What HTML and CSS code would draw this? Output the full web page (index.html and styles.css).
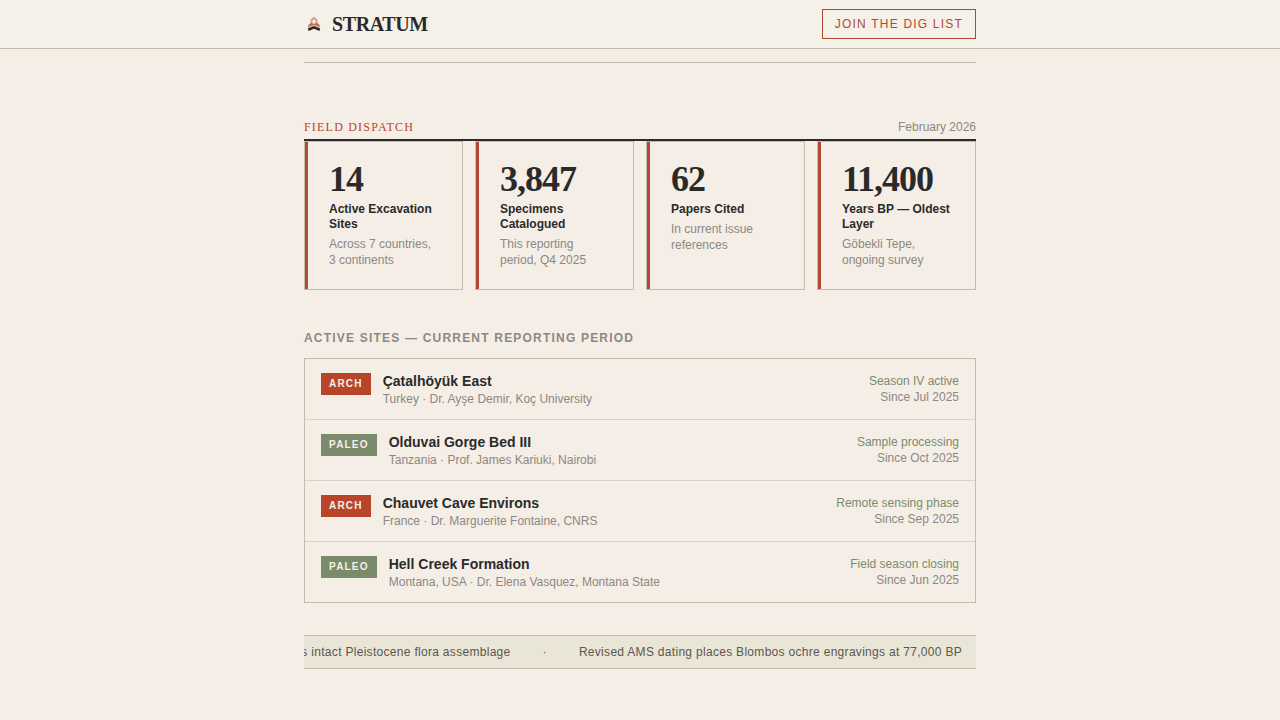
FILE: index.html
```html
<!DOCTYPE html>
<html lang="en">
  <head>
    <meta charset="UTF-8">
    <meta name="viewport" content="width=device-width, initial-scale=1">
    <title>Stratum</title>
    <link rel="stylesheet" href="styles.css">
  </head>
  <body>
    <header class="topbar">
      <div class="wrap topbar-inner">
        <a class="logo" href="#">
          <svg class="logo-mark" viewBox="0 0 20 20" aria-hidden="true">
            <path d="M7.6 9V6L10 4L12.4 6V9" fill="none" stroke="#dd9a80" stroke-width="2"/>
            <path d="M4 11.5L7 8.8L10 9.8L13 8.8L16 11.5L15.5 13L10 10.8L4.5 13Z" fill="#c4674c"/>
            <path d="M4.5 13.6L10 11.4L15.5 13.6" fill="none" stroke="#d3bc9c" stroke-width="1.4"/>
            <path d="M4.2 15.8L10 13.4L15.8 15.8" fill="none" stroke="#2a2a24" stroke-width="2.6"/>
          </svg>
          <span>STRATUM</span>
        </a>
        <button class="join" type="button">JOIN THE DIG LIST</button>
      </div>
    </header>

    <main class="wrap">
      <hr class="rule">

      <section class="dispatch">
        <div class="dispatch-head">
          <h2>FIELD DISPATCH</h2>
          <span>February 2026</span>
        </div>
        <div class="stats">
          <div class="stat">
            <div class="num">14</div>
            <div class="label">Active Excavation Sites</div>
            <div class="note">Across 7 countries, 3 continents</div>
          </div>
          <div class="stat">
            <div class="num">3,847</div>
            <div class="label">Specimens Catalogued</div>
            <div class="note">This reporting period, Q4 2025</div>
          </div>
          <div class="stat">
            <div class="num">62</div>
            <div class="label">Papers Cited</div>
            <div class="note">In current issue references</div>
          </div>
          <div class="stat">
            <div class="num">11,400</div>
            <div class="label">Years BP — Oldest Layer</div>
            <div class="note">Göbekli Tepe, ongoing survey</div>
          </div>
        </div>
      </section>

      <section class="sites">
        <h3>ACTIVE SITES — CURRENT REPORTING PERIOD</h3>
        <ul class="site-list">
          <li>
            <span class="tag arch">ARCH</span>
            <div class="site">
              <div class="name">Çatalhöyük East</div>
              <div class="meta">Turkey · Dr. Ayşe Demir, Koç University</div>
            </div>
            <div class="status"><span>Season IV active</span><br>Since Jul 2025</div>
          </li>
          <li>
            <span class="tag paleo">PALEO</span>
            <div class="site">
              <div class="name">Olduvai Gorge Bed III</div>
              <div class="meta">Tanzania · Prof. James Kariuki, Nairobi</div>
            </div>
            <div class="status"><span>Sample processing</span><br>Since Oct 2025</div>
          </li>
          <li>
            <span class="tag arch">ARCH</span>
            <div class="site">
              <div class="name">Chauvet Cave Environs</div>
              <div class="meta">France · Dr. Marguerite Fontaine, CNRS</div>
            </div>
            <div class="status"><span>Remote sensing phase</span><br>Since Sep 2025</div>
          </li>
          <li>
            <span class="tag paleo">PALEO</span>
            <div class="site">
              <div class="name">Hell Creek Formation</div>
              <div class="meta">Montana, USA · Dr. Elena Vasquez, Montana State</div>
            </div>
            <div class="status"><span>Field season closing</span><br>Since Jun 2025</div>
          </li>
        </ul>
      </section>

      <div class="ticker">
        <span>s intact Pleistocene flora assemblage</span>
        <span class="dot">·</span>
        <span>Revised AMS dating places Blombos ochre engravings at 77,000 BP</span>
      </div>
    </main>
  </body>
</html>
```
FILE: styles.css
```css
* {
  box-sizing: border-box;
}
body {
  margin: 0;
  background: #f5eee6;
  color: #2a2a2a;
  font-family: "Liberation Sans", Arial, sans-serif;
  font-size: 12px;
  line-height: 16px;
}
h2, h3, ul {
  margin: 0;
  padding: 0;
}
.wrap {
  max-width: 672px;
  margin: 0 auto;
}

/* top bar */
.topbar {
  background: #f5f1e8;
  border-bottom: 1px solid #c5bbae;
}
.topbar-inner {
  display: flex;
  align-items: center;
  justify-content: space-between;
  height: 48px;
}
.logo {
  display: flex;
  align-items: center;
  gap: 8px;
  color: #2a2a2a;
  font-family: "Liberation Serif", "Times New Roman", serif;
  font-size: 20px;
  font-weight: bold;
  line-height: 24px;
  letter-spacing: -0.02em;
  text-decoration: none;
}
.logo-mark {
  width: 20px;
  height: 20px;
}
.join {
  height: 30px;
  padding: 0 12px;
  border: 1px solid #b04a32;
  background: none;
  color: #b04a32;
  font: 12px/16px "Liberation Sans", Arial, sans-serif;
  letter-spacing: 0.1em;
}

.rule {
  margin: 13px 0 56px;
  border: 0;
  border-top: 1px solid #c5bbae;
}

/* numbers */
.dispatch-head {
  display: flex;
  justify-content: space-between;
  padding-bottom: 4px;
  border-bottom: 2px solid #2a2a2a;
  color: #8c8882;
}
.dispatch-head h2 {
  color: #b8452a;
  font: 12px/16px "Liberation Serif", "Times New Roman", serif;
  letter-spacing: 0.1em;
}
.stats {
  display: grid;
  grid-template-columns: repeat(4, 1fr);
  gap: 12px;
}
.stat {
  position: relative;
  padding: 20px 24px 21px;
  border: 1px solid #c5bbae;
}
.stat::before {
  content: "";
  position: absolute;
  top: 0;
  bottom: 0;
  left: 0;
  width: 3px;
  background: #b04a32;
}
.num {
  margin-bottom: 6px;
  font-family: "Liberation Serif", "Times New Roman", serif;
  font-size: 36px;
  font-weight: bold;
  line-height: 34px;
  letter-spacing: -1px;
}
.label {
  margin-bottom: 4px;
  font-weight: bold;
  line-height: 15px;
}
.note {
  color: #8c8882;
}

/* site list */
.sites h3 {
  margin: 40px 0 12px;
  color: #8c8882;
  font-size: 12px;
  letter-spacing: 0.1em;
}
.site-list {
  border: 1px solid #c5bbae;
  list-style: none;
}
.site-list li {
  display: flex;
  align-items: flex-start;
  gap: 12px;
  padding: 14px 16px 12px;
}
.site-list li + li {
  border-top: 1px solid #d8d0c4;
}
.tag {
  padding: 3px 8px;
  color: #f5efe6;
  font-size: 10px;
  font-weight: bold;
  letter-spacing: 0.12em;
}
.arch {
  background: #b8452a;
}
.paleo {
  background: #7a8b6c;
}
.site {
  flex: 1;
}
.name {
  margin-bottom: 2px;
  font-size: 14px;
  font-weight: bold;
}
.meta {
  color: #8c8882;
}
.status {
  color: #8c8882;
  text-align: right;
}
.status span {
  color: #7a8b6c;
}

/* news ticker, runs out past the left edge */
.ticker {
  display: flex;
  justify-content: flex-end;
  gap: 32px;
  margin: 32px 0 48px;
  padding: 8px 14px 8px 0;
  overflow: hidden;
  border-top: 1px solid #c5bbae;
  border-bottom: 1px solid #c5bbae;
  background: #eae6d7;
  color: #5a564e;
  letter-spacing: 0.025em;
  white-space: nowrap;
}
.dot {
  color: #b8452a;
}
```
